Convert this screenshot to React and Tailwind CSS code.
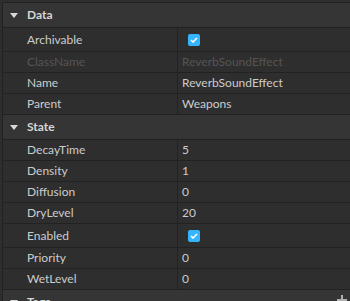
import React from "react";

const sections = [
  {
    title: "Data",
    rows: [
      { label: "Archivable", check: true },
      { label: "ClassName", value: "ReverbSoundEffect", disabled: true },
      { label: "Name", value: "ReverbSoundEffect" },
      { label: "Parent", value: "Weapons" },
    ],
  },
  {
    title: "State",
    rows: [
      { label: "DecayTime", value: "5" },
      { label: "Density", value: "1" },
      { label: "Diffusion", value: "0" },
      { label: "DryLevel", value: "20" },
      { label: "Enabled", check: true },
      { label: "Priority", value: "0" },
      { label: "WetLevel", value: "0" },
    ],
  },
];

function Caret() {
  return (
    <svg width="8" height="5" viewBox="0 0 8 5" className="absolute left-[7px] top-[10px]">
      <path d="M0 0h8L4 5z" fill="#d8d8d8" />
    </svg>
  );
}

function Header({ title, children }) {
  return (
    <div className="relative h-[25px] border-t border-[#222222] bg-[#353535] flex items-center pl-[24px] font-bold text-[#d6d6d6]">
      <Caret />
      {title}
      {children}
    </div>
  );
}

function Checkbox() {
  return (
    <div className="ml-[6px] w-[12px] h-[12px] rounded-[2px] bg-[#35b5ff] flex items-center justify-center">
      <svg width="8" height="6" viewBox="0 0 8 6">
        <path d="M1 3l2 2 4-4" stroke="#fff" strokeWidth="1.6" fill="none" />
      </svg>
    </div>
  );
}

function Row({ row }) {
  const h = row.check ? "h-[24px]" : "h-[21px]";
  const color = row.disabled ? "text-[#555555]" : "text-[#cccccc]";
  return (
    <div className={`flex ${h} border-t border-[#222222]`}>
      <div className={`w-[174px] pl-[24px] flex items-center ${color}`}>{row.label}</div>
      <div className={`flex-1 border-l border-[#222222] pl-[4px] flex items-center ${color}`}>
        {row.check ? <Checkbox /> : row.value}
      </div>
    </div>
  );
}

export default function App() {
  return (
    <div className="w-[350px] h-[301px] overflow-hidden bg-[#2e2e2e] pt-[2px] pl-[2px] font-['Lato',sans-serif] text-[12px] leading-none">
      <div className="border-l border-[#222222]">
        {sections.map((s) => (
          <div key={s.title}>
            <Header title={s.title} />
            {s.rows.map((r) => (
              <Row key={r.label} row={r} />
            ))}
          </div>
        ))}
        <Header title="Tags">
          <svg width="10" height="10" viewBox="0 0 10 10" className="absolute left-[334px] top-[5px]">
            <path d="M5 0v10M0 5h10" stroke="#b0b0b0" strokeWidth="2" />
          </svg>
        </Header>
      </div>
    </div>
  );
}
